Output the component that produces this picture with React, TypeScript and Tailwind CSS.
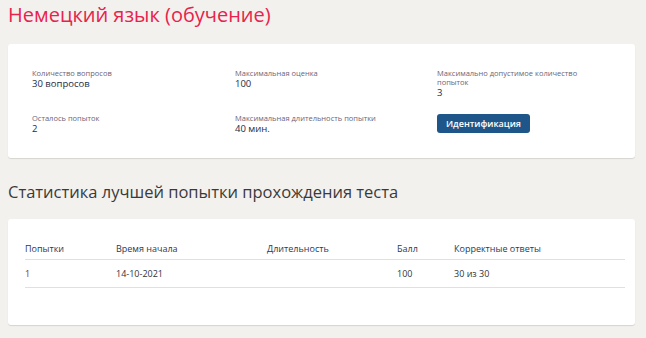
import React from "react";

const font = { fontFamily: '"Open Sans", "Noto Sans", sans-serif' };

function Field({ label, value }: { label: string; value: string }) {
  return (
    <div className="flex flex-col">
      <div className="text-[7.5px] leading-[9px] text-[#6b6478]">{label}</div>
      <div className="text-[9.5px] leading-[11px] font-medium text-[#1c2b45]">{value}</div>
    </div>
  );
}

export default function App() {
  const cols = ["Попытки", "Время начала", "Длительность", "Балл", "Корректные ответы"];
  return (
    <div className="min-h-[338px] w-[646px] bg-[#f2f1ee] px-2 pt-[2px]" style={font}>
      <h1 className="text-[20px] leading-[26px] font-medium text-[#e8234b]">Немецкий язык (обучение)</h1>
      <div className="mt-[16px] w-[627px] rounded-[3px] bg-white pl-[24px] pr-[4px] pt-[25px] pb-[24px] shadow-[0_1px_1px_rgba(0,0,0,0.12)]">
        <div className="grid grid-cols-[203px_202px_1fr] gap-y-[16px]">
          <Field label="Количество вопросов" value="30 вопросов" />
          <Field label="Максимальная оценка" value="100" />
          <div className="flex flex-col">
            <div className="w-[150px] text-[7.5px] leading-[9px] text-[#6b6478]">Максимально допустимое количество попыток</div>
            <div className="text-[9.5px] leading-[11px] font-medium text-[#1c2b45]">3</div>
          </div>
          <Field label="Осталось попыток" value="2" />
          <Field label="Максимальная длительность попытки" value="40 мин." />
          <div className="flex items-start">
            <button className="flex h-[19px] items-center rounded-[3px] bg-[#1f5689] px-[9px] text-[9px] font-semibold text-white">
              Идентификация
            </button>
          </div>
        </div>
      </div>
      <h2 className="mt-[22px] text-[16.5px] leading-[24px] text-[#3a3a3a]">Статистика лучшей попытки прохождения теста</h2>
      <div className="mt-[15px] h-[106px] w-[627px] rounded-[3px] bg-white px-[17px] pt-[19px] shadow-[0_1px_1px_rgba(0,0,0,0.12)]">
        <div className="w-[600px] text-[9px] text-[#2f3340]">
          <div className="grid grid-cols-[91px_151px_130px_57px_1fr] h-[22px] items-center border-b border-[#e2e0dc]">
            {cols.map((c) => (
              <div key={c} className="font-medium text-[#2c3a4f]">{c}</div>
            ))}
          </div>
          <div className="grid grid-cols-[91px_151px_130px_57px_1fr] h-[28px] items-center border-b border-[#e2e0dc]">
            <div className="text-[#7a2f45]">1</div>
            <div>14-10-2021</div>
            <div></div>
            <div>100</div>
            <div>30 из 30</div>
          </div>
        </div>
      </div>
    </div>
  );
}
